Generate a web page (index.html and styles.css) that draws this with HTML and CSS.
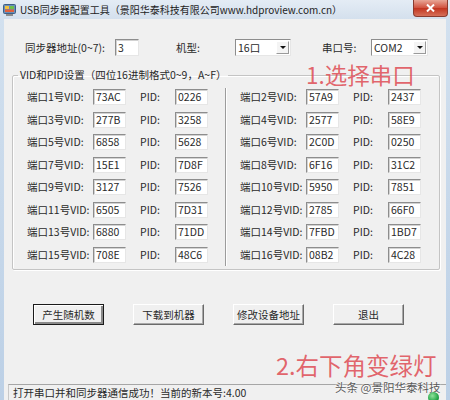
FILE: index.html
```html
<!DOCTYPE html>
<html lang="zh-CN">
<head>
    <meta charset="UTF-8">
    <title>USB同步器配置工具</title>
    <link rel="stylesheet" href="styles.css">
</head>
<body>
<div class="window">
    <!-- Titelleiste -->
    <div class="titlebar">
        <svg class="app-icon" width="13" height="13" viewBox="0 0 13 13">
            <rect x="0.5" y="1.5" width="12" height="9" rx="1" fill="#6a8fb8" stroke="#3d5f86"/>
            <rect x="2" y="3" width="4" height="3" fill="#f3c23c"/>
            <rect x="7" y="3" width="4" height="3" fill="#6cc04a"/>
            <rect x="2" y="6.5" width="9" height="2.5" fill="#e0603c"/>
            <rect x="3" y="11" width="7" height="2" fill="#8c8c8c"/>
        </svg>
        <span class="title">USB同步器配置工具（景阳华泰科技有限公司www.hdproview.com.cn）</span>
        <div class="close-btn">
            <svg width="9" height="8" viewBox="0 0 9 8">
                <path d="M1 0.5 L8 7.5 M8 0.5 L1 7.5" stroke="#fff" stroke-width="2"/>
            </svg>
        </div>
    </div>

    <div class="client">
        <div class="top-row">
            <span class="lbl lbl-addr">同步器地址(0~7):</span>
            <div class="edit edit-addr">3</div>
            <span class="lbl lbl-model">机型:</span>
            <div class="combo combo-model"><span>16口</span><i class="drop"></i></div>
            <span class="lbl lbl-port">串口号:</span>
            <div class="combo combo-port"><span>COM2</span><i class="drop"></i></div>
        </div>

        <fieldset class="group">
            <legend>VID和PID设置（四位16进制格式0~9，A~F）</legend>
            <div class="group-body">
                <div class="col col-left">
                    <span class="lbl">端口1号VID:</span><div class="edit">73AC</div><span class="lbl pid">PID:</span><div class="edit">0226</div>
                    <span class="lbl">端口3号VID:</span><div class="edit">277B</div><span class="lbl pid">PID:</span><div class="edit">3258</div>
                    <span class="lbl">端口5号VID:</span><div class="edit">6858</div><span class="lbl pid">PID:</span><div class="edit">5628</div>
                    <span class="lbl">端口7号VID:</span><div class="edit">15E1</div><span class="lbl pid">PID:</span><div class="edit">7D8F</div>
                    <span class="lbl">端口9号VID:</span><div class="edit">3127</div><span class="lbl pid">PID:</span><div class="edit">7526</div>
                    <span class="lbl">端口11号VID:</span><div class="edit">6505</div><span class="lbl pid">PID:</span><div class="edit">7D31</div>
                    <span class="lbl">端口13号VID:</span><div class="edit">6880</div><span class="lbl pid">PID:</span><div class="edit">71DD</div>
                    <span class="lbl">端口15号VID:</span><div class="edit">708E</div><span class="lbl pid">PID:</span><div class="edit">48C6</div>
                </div>
                <div class="sep"></div>
                <div class="col col-right">
                    <span class="lbl">端口2号VID:</span><div class="edit">57A9</div><span class="lbl pid">PID:</span><div class="edit">2437</div>
                    <span class="lbl">端口4号VID:</span><div class="edit">2577</div><span class="lbl pid">PID:</span><div class="edit">58E9</div>
                    <span class="lbl">端口6号VID:</span><div class="edit">2C0D</div><span class="lbl pid">PID:</span><div class="edit">0250</div>
                    <span class="lbl">端口8号VID:</span><div class="edit">6F16</div><span class="lbl pid">PID:</span><div class="edit">31C2</div>
                    <span class="lbl">端口10号VID:</span><div class="edit">5950</div><span class="lbl pid">PID:</span><div class="edit">7851</div>
                    <span class="lbl">端口12号VID:</span><div class="edit">2785</div><span class="lbl pid">PID:</span><div class="edit">66F0</div>
                    <span class="lbl">端口14号VID:</span><div class="edit">7FBD</div><span class="lbl pid">PID:</span><div class="edit">1BD7</div>
                    <span class="lbl">端口16号VID:</span><div class="edit">08B2</div><span class="lbl pid">PID:</span><div class="edit">4C28</div>
                </div>
            </div>
        </fieldset>

        <div class="buttons">
            <button class="btn btn-default">产生随机数</button>
            <button class="btn">下载到机器</button>
            <button class="btn">修改设备地址</button>
            <button class="btn">退出</button>
        </div>

        <div class="statusbar">打开串口并和同步器通信成功！当前的新本号:4.00</div>
    </div>

    <!-- Anmerkungen über dem Screenshot -->
    <div class="note note-1">1.选择串口</div>
    <div class="note note-2">2.右下角变绿灯</div>
    <div class="watermark">头条 @景阳华泰科技</div>
    <div class="led"></div>
</div>
</body>
</html>
```

FILE: styles.css
```css
* {
    margin: 0;
    padding: 0;
    box-sizing: border-box;
}

body {
    width: 450px;
    height: 400px;
    overflow: hidden;
    font-family: "Noto Sans CJK SC", "Microsoft YaHei", sans-serif;
    font-size: 10.5px;
    color: #2a2a2a;
}

.window {
    position: relative;
    width: 450px;
    height: 400px;
    background: linear-gradient(#d3e1ef, #bcd0e6);
    overflow: hidden;
}

/* Titelleiste */
.titlebar {
    display: flex;
    align-items: center;
    height: 19px;
    padding-left: 3px;
    background: linear-gradient(#e4ecf5, #d4e0ed);
}

.app-icon {
    flex: none;
}

.title {
    margin-left: 4px;
    font-size: 10px;
    line-height: 19px;
    color: #1d1d1d;
    white-space: nowrap;
}

.close-btn {
    display: flex;
    align-items: center;
    justify-content: center;
    width: 35px;
    height: 17px;
    margin-left: auto;
    margin-right: 2px;
    align-self: flex-start;
    border: 1px solid #8a3b2f;
    border-top: none;
    border-radius: 0 0 4px 4px;
    background: linear-gradient(#e8a696, #d0503d 50%, #c2341f 51%, #d5705a);
}

/* Client-Bereich */
.client {
    display: flex;
    flex-direction: column;
    height: 381px;
    margin: 0 4px;
    background: #f0f0f0;
}

.lbl {
    line-height: 16px;
    white-space: nowrap;
}

.edit {
    height: 16px;
    padding-left: 2px;
    line-height: 14px;
    background: #fff;
    border: 1px solid;
    border-color: #8d8d8d #e6e6e6 #e6e6e6 #8d8d8d;
    box-shadow: inset 1px 1px #d2d2d2;
    white-space: nowrap;
}

.top-row {
    display: flex;
    align-items: center;
    height: 17px;
    margin-top: 20px;
    padding-left: 21px;
}

.top-row .edit {
    height: 17px;
    line-height: 15px;
}

.lbl-addr { width: 90px; }
.edit-addr { width: 24px; }
.lbl-model { width: 59px; margin-left: 37px; }
.lbl-port { width: 49px; margin-left: 31px; }

.combo {
    display: flex;
    align-items: center;
    height: 17px;
    padding: 0 1px 0 2px;
    background: #fff;
    border: 1px solid;
    border-color: #8d8d8d #e6e6e6 #e6e6e6 #8d8d8d;
}

.combo span {
    flex: 1;
    line-height: 15px;
}

.combo-model { width: 56px; }
.combo-port { width: 57px; }

.drop {
    position: relative;
    width: 13px;
    height: 13px;
    background: #f4f4f4;
    border: 1px solid;
    border-color: #fff #9a9a9a #9a9a9a #fff;
}

.drop::after {
    content: "";
    position: absolute;
    left: 3px;
    top: 4px;
    border-left: 3px solid transparent;
    border-right: 3px solid transparent;
    border-top: 3px solid #111;
}

/* Gruppenfeld VID/PID */
.group {
    width: 428px;
    margin: 12px 0 0 8px;
    padding: 7px 0 6px 0;
    border: 1px solid #c4c4c4;
    border-radius: 2px;
    box-shadow: 1px 1px #fff, inset 1px 1px #fff;
}

.group legend {
    margin-left: 5px;
    padding: 0 2px;
    line-height: 14px;
    white-space: nowrap;
}

.group-body {
    display: flex;
}

.col {
    display: grid;
    grid-template-columns: 66px 33px 49px 33px;
    grid-auto-rows: 16px;
    row-gap: 6.5px;
}

.col-left {
    width: 212px;
    padding-left: 14px;
}

.col-right {
    padding-left: 13px;
}

.pid {
    padding-left: 14px;
}

.sep {
    width: 2px;
    margin: -1px 0 -3px;
    border-left: 1px solid #9c9c9c;
    border-right: 1px solid #fff;
}

/* Schaltflächen */
.buttons {
    display: flex;
    gap: 29px;
    margin-top: 34px;
    padding-left: 29px;
}

.btn {
    width: 71px;
    height: 21px;
    font-family: inherit;
    font-size: 10.5px;
    color: #2a2a2a;
    background: #f0f0f0;
    border: 1px solid;
    border-color: #fff #6a6a6a #6a6a6a #fff;
    box-shadow: inset -1px -1px #a9a9a9;
}

.btn-default {
    border: 1px solid #1a1a1a;
    box-shadow: inset 1px 1px #fff, inset -2px -2px #8a8a8a;
}

/* Statusleiste */
.statusbar {
    height: 16px;
    margin-top: auto;
    margin-left: 4px;
    padding-left: 4px;
    font-size: 10.5px;
    line-height: 15px;
    border-top: 1px solid #a6a6a6;
    border-left: 1px solid #c8c8c8;
    white-space: nowrap;
}

/* Anmerkungen */
.note {
    position: absolute;
    line-height: 1;
    white-space: nowrap;
    color: rgba(222, 70, 78, 0.82);
}

.note-1 {
    left: 306px;
    top: 63px;
    font-size: 22.5px;
}

.note-2 {
    left: 276px;
    top: 352px;
    font-size: 23.5px;
    line-height: 26px;
}

.watermark {
    position: absolute;
    left: 335px;
    top: 381px;
    font-size: 11.5px;
    line-height: 13px;
    color: #5a5a5a;
    text-shadow: 0 0 2px #fff, 0 0 2px #fff;
    white-space: nowrap;
}

.led {
    position: absolute;
    left: 428px;
    top: 392px;
    width: 11px;
    height: 11px;
    border-radius: 50%;
    background: radial-gradient(circle at 40% 35%, #8fe39a, #23a447 60%, #1b7f36);
}
```
